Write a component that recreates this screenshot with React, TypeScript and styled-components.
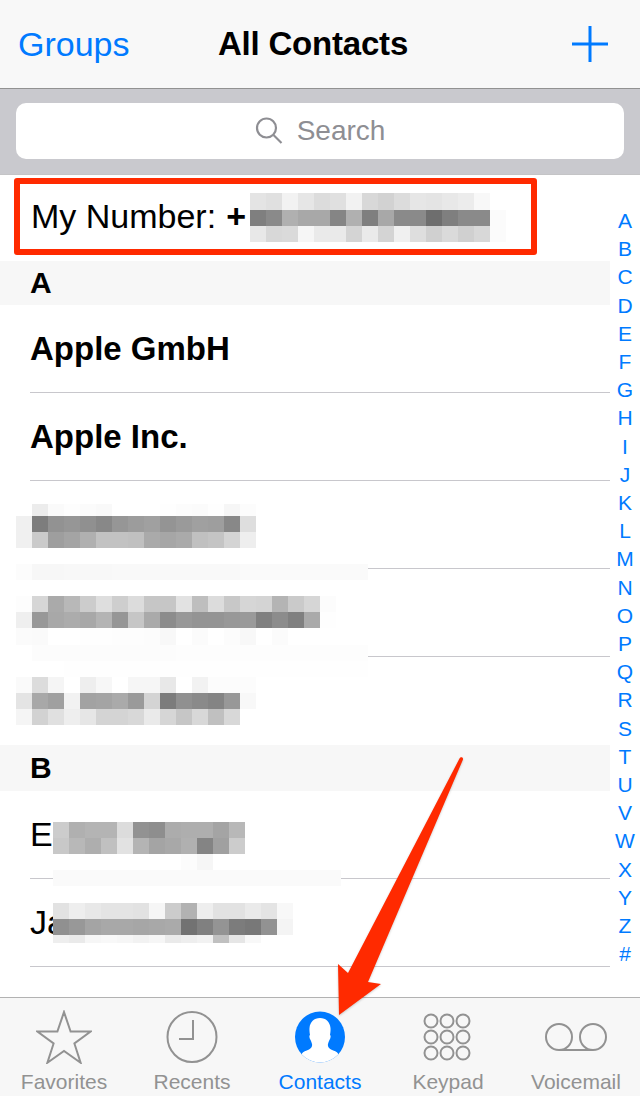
import React from "react";
import styled, {createGlobalStyle} from "styled-components";

const BLUE = "#007aff";
const RED = "#ff2a00";
const TAB_GRAY = "#929292";

const GlobalStyle = createGlobalStyle`
  html, body {
    margin: 0;
    padding: 0;
    background: #fff;
  }
  body {
    font-family: "Liberation Sans", Arial, sans-serif;
  }
`;

const Page = styled.div`
  position: relative;
  width: 640px;
  height: 1096px;
  display: flex;
  flex-direction: column;
  overflow: hidden;
  color: #000;
`;

const NavBar = styled.header`
  height: 88px;
  flex: none;
  display: grid;
  grid-template-columns: 1fr auto 1fr;
  align-items: center;
  padding: 0 32px 0 18px;
  background: #f8f8f8;
  border-bottom: 1px solid #929292;
`;

const BackLink = styled.span`
  font-size: 34px;
  color: ${BLUE};
`;

const Title = styled.h1`
  margin: 0;
  font-size: 33px;
  font-weight: 700;
  letter-spacing: -0.2px;
`;

const AddButton = styled.span`
  justify-self: end;
  display: flex;
  color: ${BLUE};
`;

const SearchBar = styled.div`
  height: 86px;
  flex: none;
  box-sizing: border-box;
  display: flex;
  align-items: center;
  padding: 0 16px 1px;
  background: #c9c9ce;
  border-bottom: 1px solid #c4c4c6;
`;

const SearchField = styled.div`
  flex: 1;
  height: 56px;
  display: flex;
  align-items: center;
  justify-content: center;
  gap: 14px;
  background: #fff;
  border-radius: 10px;
  color: #8e8e93;
  font-size: 28px;
`;

const Body = styled.main`
  flex: 1;
  display: flex;
  min-height: 0;
`;

const List = styled.div`
  width: 610px;
  flex: none;
`;

const MyNumber = styled.div`
  height: 86px;
  box-sizing: border-box;
  display: flex;
  align-items: center;
  padding: 0 0 4px 31px;
  font-size: 34px;
`;

const Plus = styled.b`
  margin-left: 10px;
`;

const SectionHeader = styled.div<{$height: number}>`
  height: ${p => p.$height}px;
  display: flex;
  align-items: center;
  padding-left: 30px;
  background: #f7f7f7;
  font-size: 30px;
  font-weight: 700;
`;

const Row = styled.div<{$last?: boolean}>`
  height: 88px;
  box-sizing: border-box;
  display: flex;
  align-items: center;
  margin-left: 30px;
  font-size: 34px;
  border-bottom: 1px solid ${p => (p.$last ? "transparent" : "#c8c7cc")};
`;

const Company = styled.b`
  font-size: 33px;
`;

const IndexBar = styled.nav`
  flex: 1;
  display: flex;
  flex-direction: column;
  align-items: center;
  padding-top: 32px;
  color: ${BLUE};
  font-size: 21px;
  line-height: 28.2px;
`;

const TabBar = styled.footer`
  height: 98px;
  flex: none;
  display: grid;
  grid-template-columns: repeat(5, 1fr);
  background: #f7f7f7;
  border-top: 1px solid #b2b2b2;
`;

const Tab = styled.div<{$active?: boolean}>`
  display: flex;
  flex-direction: column;
  align-items: center;
  padding-top: 12px;
  color: ${p => (p.$active ? BLUE : TAB_GRAY)};
  font-size: 21px;
`;

const TabIcon = styled.div`
  height: 54px;
  display: flex;
  align-items: center;
  justify-content: center;
  margin-bottom: 6px;
`;

const Highlight = styled.div`
  position: absolute;
  left: 14px;
  top: 178px;
  width: 523px;
  height: 77px;
  box-sizing: border-box;
  border: 6px solid ${RED};
  border-radius: 3px;
`;

const Arrow = styled.svg`
  position: absolute;
  left: 330px;
  top: 750px;
  filter: drop-shadow(0 1px 1px rgba(0, 0, 0, 0.2));
`;

const Mosaic = styled.div<{$left: number; $top: number}>`
  position: absolute;
  left: ${p => p.$left}px;
  top: ${p => p.$top}px;
  display: flex;
  flex-direction: column;
`;

const MosaicRow = styled.div`
  display: flex;
`;

const MosaicCell = styled.span`
  width: 16px;
  flex: none;
`;

type Block = {left: number; top: number; rows: [number, string][]};

// each row: height in px, then one gray level (hex) per 16px cell
const BLOCKS: Block[] = [
  {
    left: 250,
    top: 193,
    rows: [
      [17, "e4 e0 f2 e6 dc e0 f2 d8 d2 dc e6 e4 e8 ec f8"],
      [16, "7f 8a b0 a8 a8 85 b0 7f a8 8a 8a 6e 7f 8a 8a fb"],
      [16, "e8 d8 da f6 ea ea d4 ea d4 f0 de d0 da d0 d8 fb"],
    ],
  },
  {
    left: 16,
    top: 504,
    rows: [
      [12, "ff ec fa fd fb f9 ff ff ff fe fc fb fe f6 fc"],
      [16, "f0 7d 92 96 90 88 96 9c a0 94 9a a0 9e 88 de"],
      [16, "f0 ca 9e a4 b0 c2 c2 c0 aa a6 aa c0 c4 d4 ee"],
      [16, "ff ff ff ff ff ff ff ff ff ff ff ff ff ff ff ff ff ff ff ff ff ff"],
      [16, "fc f7 f7 f8 f8 f8 f9 f9 f9 f9 f9 f9 f9 f9 fa fa fa fa fa fa fa fa"],
    ],
  },
  {
    left: 16,
    top: 596,
    rows: [
      [16, "fd d6 aa b8 cc de ce dc c6 c6 e2 be dc c8 d6 d4 b4 ca d6 fc"],
      [16, "ef 98 a8 ac a8 b4 96 c6 aa 8c 98 94 94 98 9a 80 8c 80 aa fe"],
      [17, "fb fa ff ff fe fe fd fd fc f8 ff fb ff fc f8 ff fb ff ff ff"],
      [16, "ff fc fc fc fc fc fc fc fc fc fd fd fd fd fd fd fd fd fd fd fd fd"],
      [16, "ff ff ff fe fe fe fe fe fe fe fe fe fe fe fe fe fe fe fe fe fe fe"],
      [16, "fa dc f5 ff ee f7 ff f6 f6 e8 ff f2 fc fc fc"],
      [16, "e4 a8 a0 f2 a2 a4 aa 9a d4 7c 90 8a 84 98 f8"],
      [16, "f5 d2 e0 ee e6 d4 d4 d8 ea d6 c6 d8 c0 d8 ff"],
    ],
  },
  {
    left: 53,
    top: 822,
    rows: [
      [16, "cc b0 b4 b4 dc 92 8e ac ae ae a4 b8"],
      [16, "c8 b8 ae c0 e2 b4 a4 a8 b0 84 a0 cc"],
      [16, "ff ff ff ff ff ff ff ff fc f6 ff ff"],
      [16, "fa fa fa fa fa fa fa fa fa fa fa fa fa fa fa fa fa fa"],
      [17, "ff ff ff ff ff ff ff ff ff ff ff ff ff ff ff ff ff ff"],
      [16, "e2 ee e8 e4 e4 e2 f6 cc b2 ee e2 e2 ea e4 f8"],
      [16, "90 98 a4 a8 a8 a6 a8 aa 72 80 94 7c 78 92 f4"],
      [8, "ee ea f6 f8 f6 f2 f6 ea ee f2 c0 e6 f8"],
    ],
  },
];

const INDEX = "ABCDEFGHIJKLMNOPQRSTUVWXYZ#".split("");

const PlusIcon = () => (
  <svg width="36" height="36" viewBox="0 0 36 36" fill="none" stroke="currentColor" strokeWidth="3">
    <path d="M18 0v36M0 18h36" />
  </svg>
);

const SearchIcon = () => (
  <svg width="28" height="28" viewBox="0 0 28 28" fill="none" stroke="#8e8e93" strokeWidth="2.2">
    <circle cx="11.5" cy="11" r="9.5" />
    <path d="M18.5 18l8 8" />
  </svg>
);

const StarIcon = () => (
  <svg width="56" height="54" viewBox="0 0 56 54" fill="none" stroke={TAB_GRAY} strokeWidth="2">
    <path d="M28 2l6.6 19.6h20L38.4 33.5l6.2 19.2L28 41 11.400 52.700l6.200-19.200L1.400 21.600h20z" />
  </svg>
);

const ClockIcon = () => (
  <svg width="52" height="54" viewBox="0 0 52 54" fill="none" stroke={TAB_GRAY} strokeWidth="2">
    <ellipse cx="26" cy="27" rx="24.500" ry="25" />
    <path d="M27 10v19H13" />
  </svg>
);

const ContactsIcon = () => (
  <svg width="52" height="54" viewBox="0 0 52 54">
    <defs>
      <clipPath id="contact-disc">
        <ellipse cx="26" cy="27" rx="25" ry="25.500" />
      </clipPath>
    </defs>
    <ellipse cx="26" cy="27" rx="25" ry="25.500" fill={BLUE} />
    <path
      clipPath="url(#contact-disc)"
      fill="#fff"
      d="M26 8c6 0 10 4 10.500 10 .2 3-.2 5-.5 7 1 .5.8 3-.5 5-.6 1-1 2-1.500 4-.5 2 .5 4 3 5.500 3 1.500 6 2 7 4l2 14H6l2-14c1-2 4-2.500 7-4 2.500-1.500 3.500-3.500 3-5.500-.5-2-.9-3-1.500-4-1.300-2-1.500-4.500-.5-5-.3-2-.7-4-.5-7C16 12 20 8 26 8z"
    />
  </svg>
);

const KeypadIcon = () => (
  <svg width="52" height="52" viewBox="0 0 52 52" fill="none" stroke={TAB_GRAY} strokeWidth="2">
    {[10, 26, 42].map(cy =>
      [9, 25, 41].map(cx => <circle key={`${cx}-${cy}`} cx={cx} cy={cy} r="6.500" />)
    )}
  </svg>
);

const VoicemailIcon = () => (
  <svg width="64" height="54" viewBox="0 0 64 54" fill="none" stroke={TAB_GRAY} strokeWidth="2">
    <circle cx="15" cy="27" r="13" />
    <circle cx="49" cy="27" r="13" />
    <path d="M15 40h34" />
  </svg>
);

const TABS = [
  {label: "Favorites", icon: <StarIcon />},
  {label: "Recents", icon: <ClockIcon />},
  {label: "Contacts", icon: <ContactsIcon />, active: true},
  {label: "Keypad", icon: <KeypadIcon />},
  {label: "Voicemail", icon: <VoicemailIcon />},
];

const App = () => {
  return (
    <Page>
      <GlobalStyle />
      <NavBar>
        <BackLink>Groups</BackLink>
        <Title>All Contacts</Title>
        <AddButton>
          <PlusIcon />
        </AddButton>
      </NavBar>
      <SearchBar>
        <SearchField>
          <SearchIcon />
          <span>Search</span>
        </SearchField>
      </SearchBar>
      <Body>
        <List>
          <MyNumber>
            My Number:<Plus>+</Plus>
          </MyNumber>
          <SectionHeader $height={44}>A</SectionHeader>
          <Row>
            <Company>Apple GmbH</Company>
          </Row>
          <Row>
            <Company>Apple Inc.</Company>
          </Row>
          <Row />
          <Row />
          <Row $last />
          <SectionHeader $height={46}>B</SectionHeader>
          <Row>Ei</Row>
          <Row>Ja</Row>
        </List>
        <IndexBar>
          {INDEX.map(letter => (
            <span key={letter}>{letter}</span>
          ))}
        </IndexBar>
      </Body>
      <TabBar>
        {TABS.map(tab => (
          <Tab key={tab.label} $active={tab.active}>
            <TabIcon>{tab.icon}</TabIcon>
            {tab.label}
          </Tab>
        ))}
      </TabBar>

      {BLOCKS.map(block => (
        <Mosaic key={block.top} $left={block.left} $top={block.top}>
          {block.rows.map(([height, cells], i) => (
            <MosaicRow key={i} style={{height}}>
              {cells.split(" ").map((gray, j) => (
                <MosaicCell key={j} style={{background: `#${gray}${gray}${gray}`}} />
              ))}
            </MosaicRow>
          ))}
        </Mosaic>
      ))}
      <Highlight />
      <Arrow width="140" height="270" viewBox="0 0 140 270">
        <path
          fill={RED}
          d="M129.500 8.500c1-2 4-1.500 3.500 1L38 232l13 2-42 31-1-51 10 9z"
        />
      </Arrow>
    </Page>
  );
};

export default App;
